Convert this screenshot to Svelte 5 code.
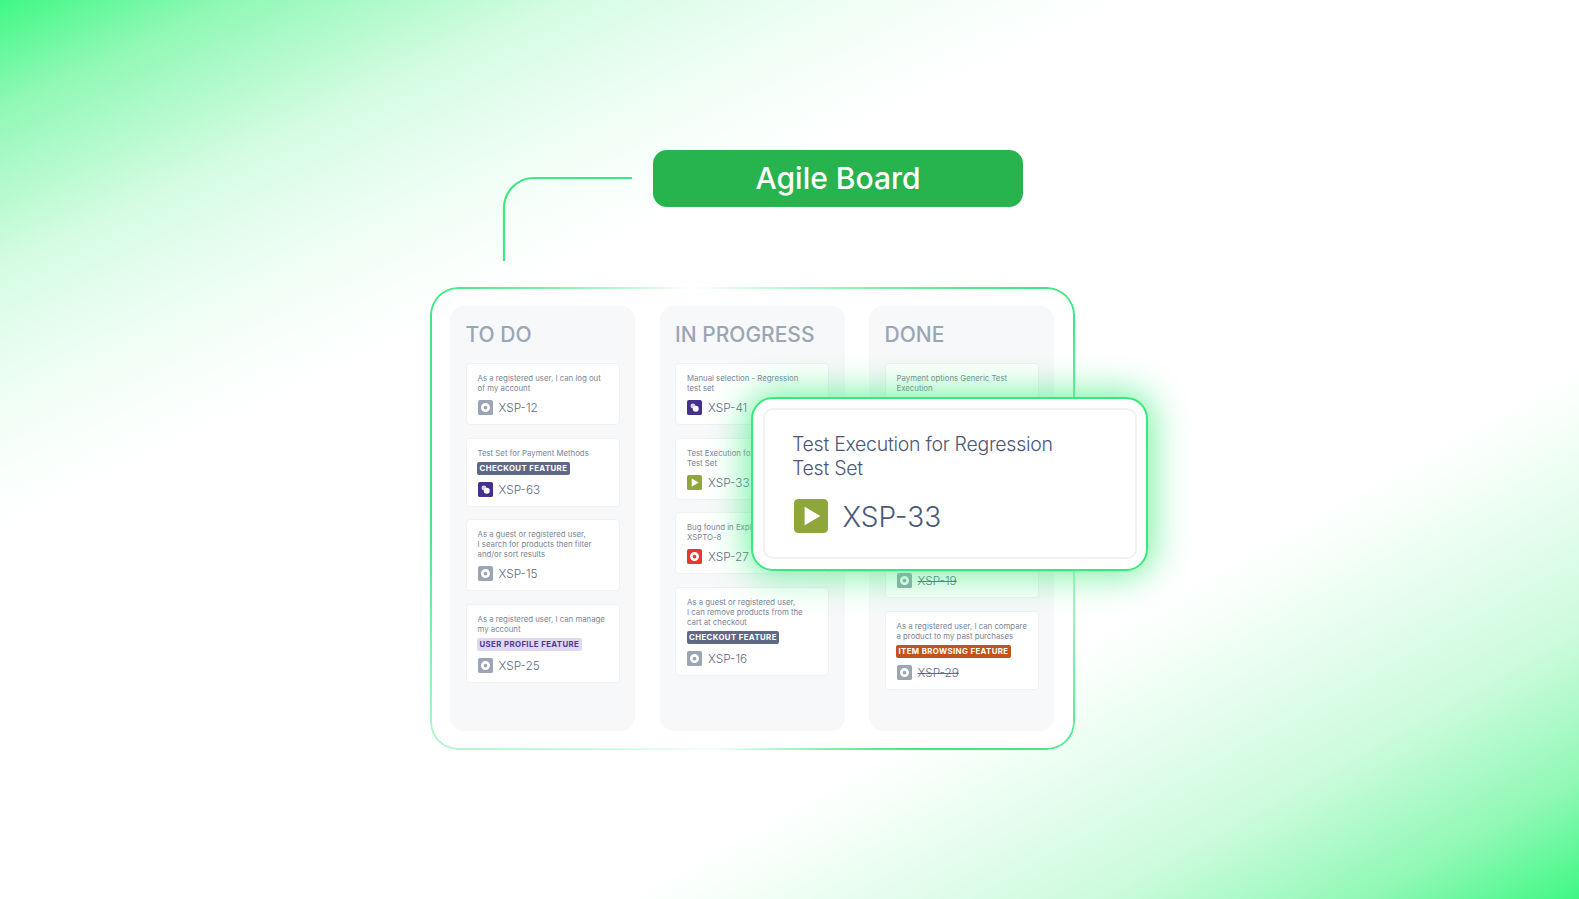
<script lang="ts">
  type Item = { text: string[]; tag?: string; key: string; icon: string; done?: boolean };

  const columns: { title: string; items: Item[] }[] = [
    {
      title: 'TO DO',
      items: [
        { text: ['As a registered user, I can log out', 'of my account'], key: 'XSP-12', icon: 'story' },
        { text: ['Test Set for Payment Methods'], tag: 'checkout', key: 'XSP-63', icon: 'set' },
        { text: ['As a guest or registered user,', 'I search for products then filter', 'and/or sort results'], key: 'XSP-15', icon: 'story' },
        { text: ['As a registered user, I can manage', 'my account'], tag: 'profile', key: 'XSP-25', icon: 'story' }
      ]
    },
    {
      title: 'IN PROGRESS',
      items: [
        { text: ['Manual selection - Regression', 'test set'], key: 'XSP-41', icon: 'set' },
        { text: ['Test Execution for Regression', 'Test Set'], key: 'XSP-33', icon: 'run' },
        { text: ['Bug found in Exploratory Testing', 'XSPTO-8'], key: 'XSP-27', icon: 'bug' },
        { text: ['As a guest or registered user,', 'I can remove products from the', 'cart at checkout'], tag: 'checkout', key: 'XSP-16', icon: 'story' }
      ]
    },
    {
      title: 'DONE',
      items: [
        { text: ['Payment options Generic Test', 'Execution'], key: 'XSP-31', icon: 'run', done: true },
        { text: ['Test Set for Regression Suite'], tag: 'checkout', key: 'XSP-22', icon: 'set', done: true },
        { text: ['As a registered user, I can view', 'my orders'], tag: 'profile', key: 'XSP-19', icon: 'story', done: true },
        { text: ['As a registered user, I can compare', 'a product to my past purchases'], tag: 'browsing', key: 'XSP-29', icon: 'story', done: true }
      ]
    }
  ];

  const tags: Record<string, string> = {
    checkout: 'CHECKOUT FEATURE',
    profile: 'USER PROFILE FEATURE',
    browsing: 'ITEM BROWSING FEATURE'
  };
</script>

{#snippet issueIcon(kind: string, size: number)}
  <svg class="issue-icon {kind}" width={size} height={size} viewBox="0 0 16 16" aria-hidden="true">
    <rect width="16" height="16" rx="2" />
    {#if kind === 'set'}
      <circle cx="6.3" cy="6.3" r="2.6" fill="#d8d2ea" />
      <circle cx="9.3" cy="9.3" r="3.2" fill="#fff" />
    {:else if kind === 'run'}
      <path d="M5 3.6 12.4 8 5 12.4Z" fill="#fff" />
    {:else}
      <circle cx="8" cy="8" r="3.4" fill="none" stroke="#fff" stroke-width="2.8" />
    {/if}
  </svg>
{/snippet}

<main class="page">
  <header class="head">
    <svg class="connector" width="132" height="111" viewBox="0 0 132 111" aria-hidden="true">
      <path d="M2 111V58A30 30 0 0 1 32 28H130" fill="none" stroke="#3fe982" stroke-width="2.2" />
    </svg>
    <div class="title">Agile Board</div>
  </header>

  <section class="board">
    {#each columns as col}
      <div class="column">
        <h2>{col.title}</h2>
        <div class="cards">
          {#each col.items as item}
            <article class="card">
              <p>{#each item.text as line}<span>{line}</span>{/each}</p>
              {#if item.tag}
                <div class="tag {item.tag}">{tags[item.tag]}</div>
              {/if}
              <div class="key" class:done={item.done}>
                {@render issueIcon(item.icon, 15)}
                <span>{item.key}</span>
              </div>
            </article>
          {/each}
        </div>
      </div>
    {/each}

    <aside class="focus">
      <div class="focus-inner">
        <p>Test Execution for Regression<br />Test Set</p>
        <div class="focus-key">
          {@render issueIcon('run', 34)}
          <span>XSP-33</span>
        </div>
      </div>
    </aside>
  </section>
</main>

<style>
  :global(body) {
    margin: 0;
    background: #fff;
  }

  .page {
    box-sizing: border-box;
    width: 1579px;
    height: 899px;
    padding: 150px 0 0 430px;
    overflow: hidden;
    font-family: Inter, "Liberation Sans", sans-serif;
    background:
      linear-gradient(to bottom right, #3ff884 0%, #90f8b5 10%, #d5fce3 25%, #effef5 37%, #fafffc 45%, #fff 50%) no-repeat 0 0 / 1150px 537px,
      linear-gradient(to top left, #3ff884 0%, #90f8b5 11%, #ccfbdd 25%, #e6fdee 37%, #f6fff9 45%, #fff 50%) no-repeat 100% 100% / 960px 537px,
      #fff;
  }

  .head {
    display: flex;
    align-items: flex-start;
    padding-left: 72px;
  }

  .connector {
    display: block;
    flex: none;
  }

  .title {
    width: 370px;
    height: 57px;
    margin-left: 19px;
    border-radius: 14px;
    background: #27b34d;
    color: #fff;
    font-size: 30px;
    font-weight: 500;
    line-height: 56px;
    text-align: center;
  }

  .board {
    position: relative;
    box-sizing: border-box;
    display: flex;
    gap: 24.5px;
    width: 645px;
    height: 463px;
    margin-top: 26px;
    padding: 19px 20px;
    border-radius: 28px;
    background: #fff;
  }

  .board::before {
    content: '';
    position: absolute;
    inset: 0;
    padding: 2px;
    border-radius: 28px;
    background: conic-gradient(from -15deg, #fff 0deg, #3fe982 65deg, #3fe982 75deg, #d5fbe3 105deg, #3fe982 145deg, #3fe982 160deg, #f4fef8 205deg, #b0f5ca 250deg, #3fe982 285deg, #3fe982 320deg, #fff 360deg);
    -webkit-mask: linear-gradient(#000 0 0) content-box, linear-gradient(#000 0 0);
    -webkit-mask-composite: xor;
    mask-composite: exclude;
  }

  .column {
    box-sizing: border-box;
    flex: 0 0 185px;
    min-width: 0;
    padding: 0 15.5px;
    border-radius: 14px;
    background: #f7f8fa;
  }

  h2 {
    margin: 16px 0 16px;
    color: #9aa5b5;
    font-size: 21px;
    font-weight: 500;
    line-height: 25px;
  }

  .cards {
    display: flex;
    flex-direction: column;
    gap: 12.5px;
  }

  .card {
    box-sizing: border-box;
    padding: 9px 11px;
    border: 1px solid #eff1f3;
    border-radius: 4px;
    background: #fff;
  }

  .card p {
    margin: 0;
    color: #7a8499;
    font-size: 7.8px;
    line-height: 10px;
  }

  .card p span {
    display: block;
    white-space: nowrap;
  }

  .tag {
    width: fit-content;
    margin: 4.5px 0 0 -0.5px;
    padding: 0 2.5px;
    border-radius: 2px;
    font-size: 7.8px;
    font-weight: 700;
    letter-spacing: 0.4px;
    line-height: 12.5px;
    white-space: nowrap;
  }

  .tag.checkout {
    background: #5e6a85;
    color: #fff;
  }

  .tag.profile {
    background: #e0d7f1;
    color: #4d3a96;
  }

  .tag.browsing {
    background: #c2531a;
    color: #fff;
  }

  .key {
    display: flex;
    align-items: center;
    gap: 6px;
    height: 15px;
    margin-top: 7px;
    color: #5f6a83;
    font-size: 11.8px;
    font-weight: 300;
    line-height: 13px;
  }

  .key span {
    padding-top: 2px;
  }

  .key.done span {
    text-decoration: line-through;
  }

  .issue-icon {
    display: block;
    flex: none;
  }

  .issue-icon.story rect { fill: #9ba5b4; }
  .issue-icon.set rect { fill: #45308c; }
  .issue-icon.run rect { fill: #8fa63a; }
  .issue-icon.bug rect { fill: #e5392f; }

  .focus {
    position: absolute;
    left: 321px;
    top: 109.5px;
    box-sizing: border-box;
    width: 397px;
    height: 174px;
    padding: 9.5px;
    border: 2.5px solid #37ea7b;
    border-radius: 22px;
    background: #fff;
    box-shadow: 0 0 36px 4px rgba(50, 235, 120, 0.7);
  }

  .focus-inner {
    box-sizing: border-box;
    height: 100%;
    padding: 21.5px 27.5px;
    border: 2px solid #f0f1f3;
    border-radius: 10px;
  }

  .focus-inner p {
    margin: 0;
    color: #4b5878;
    font-size: 19.5px;
    font-weight: 300;
    letter-spacing: -0.28px;
    line-height: 24px;
  }

  .focus-key {
    display: flex;
    align-items: center;
    gap: 15px;
    height: 34px;
    margin: 19.5px 0 0 1.5px;
    color: #4b5878;
    font-size: 28px;
    font-weight: 300;
    line-height: 32px;
  }

  .focus-key span {
    padding-top: 2px;
  }
</style>
